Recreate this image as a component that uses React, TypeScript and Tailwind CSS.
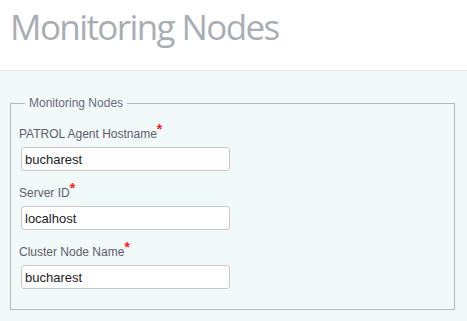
import React from "react";

const fields = [
  { label: "PATROL Agent Hostname", value: "bucharest" },
  { label: "Server ID", value: "localhost" },
  { label: "Cluster Node Name", value: "bucharest" },
];

export default function App() {
  return (
    <div className="w-[467px] h-[321px] bg-[#f2f9f9] overflow-hidden font-['Liberation_Sans',Arial,sans-serif]">
      <div className="h-[71px] bg-white border-b border-[#dfe4e6] pl-[10px] pt-[3px]">
        <h1 className="text-[35px] leading-[48px] text-[#a9aeb6] font-normal tracking-[-1.6px] font-['Open_Sans',sans-serif]">
          Monitoring Nodes
        </h1>
      </div>
      <fieldset className="mt-[25px] ml-[10px] w-[445px] h-[214px] border border-[#b9b9b9] pl-[8px]">
        <legend className="ml-[6px] px-[4px] text-[12px] leading-[14px] text-[#6a6a7a]">Monitoring Nodes</legend>
        <div className="flex flex-col gap-[13px] pt-[15px]">
          {fields.map((f) => (
            <div key={f.label} className="flex flex-col">
              <label className="text-[12px] leading-[16px] text-[#5d5d6b] mb-[5px]">
                {f.label}
                <span className="text-[#ff1a1a] text-[14px] font-bold relative top-[-4px]">*</span>
              </label>
              <input
                readOnly
                value={f.value}
                className="ml-[2px] w-[209px] h-[24px] bg-white border border-[#c9c9c9] rounded-[3px] px-[3px] text-[13px] text-[#222] outline-none font-['Liberation_Sans',Arial,sans-serif]"
              />
            </div>
          ))}
        </div>
      </fieldset>
    </div>
  );
}
